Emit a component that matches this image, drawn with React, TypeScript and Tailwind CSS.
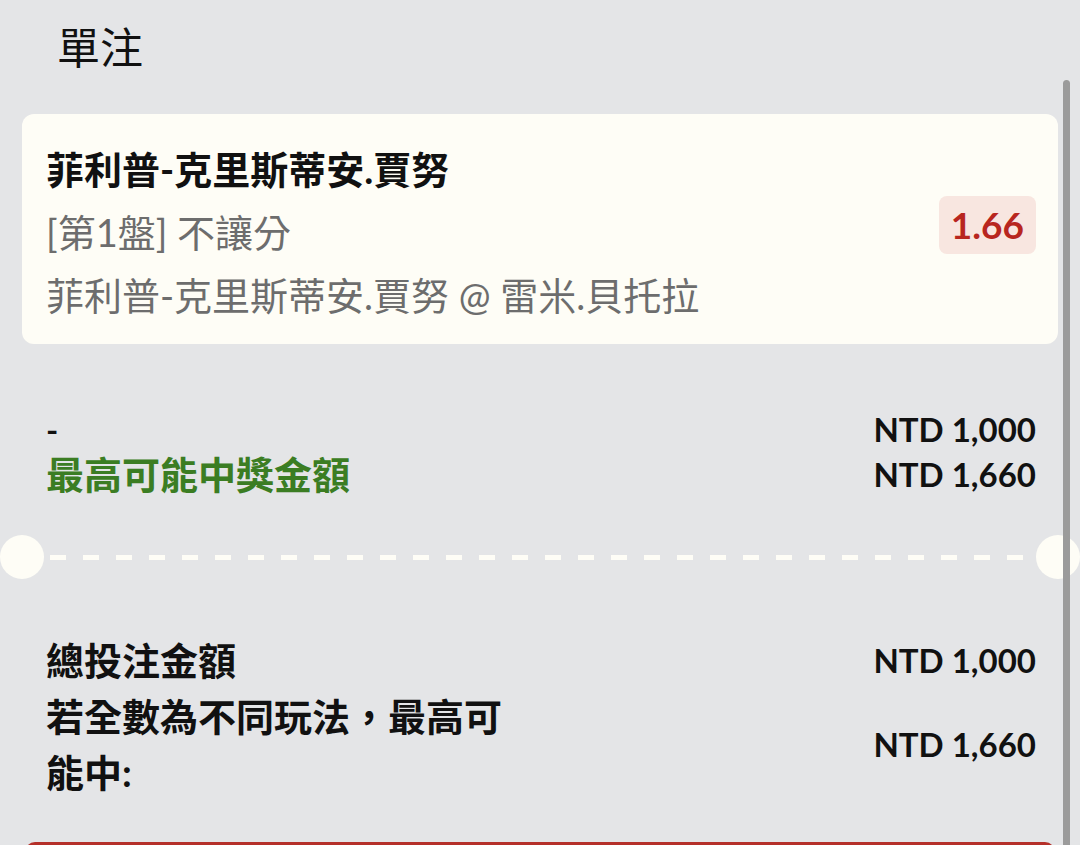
export default function App() {
  return (
    <div
      className="relative h-[845px] w-[1080px] overflow-hidden bg-[#e4e5e7] text-[#111]"
      style={{ fontFamily: 'Lato, "Noto Sans CJK TC", sans-serif' }}
    >
      {/* Header */}
      <div className="pl-[57px] pt-[18px] text-[43px] leading-[60px]">單注</div>

      <div className="px-[22px] pt-[36px]">
        {/* Selection card */}
        <div className="flex items-center justify-between rounded-[12px] bg-[#fefdf6] pl-[24px] pr-[22px] pt-[24px] pb-[17px]">
          <div className="text-[38px] leading-[63px]">
            <div className="font-bold text-[#111]">菲利普-克里斯蒂安.賈努</div>
            <div className="text-[#6d6d6d]">[第1盤] 不讓分</div>
            <div className="text-[#6d6d6d]">菲利普-克里斯蒂安.賈努 @ 雷米.貝托拉</div>
          </div>
          <div className="mb-[16px] rounded-[8px] bg-[#f8e6e0] px-[12px] text-[37px] font-bold leading-[58px] text-[#b8261f]">
            1.66
          </div>
        </div>

        {/* Stake */}
        <div className="mt-[63px] pl-[24px] pr-[22px] font-bold leading-[45px]">
          <div className="flex items-center justify-between">
            <span className="text-[33px]">-</span>
            <span className="text-[33px]">NTD 1,000</span>
          </div>
          <div className="flex items-center justify-between">
            <span className="text-[38px] text-[#3b7d23]">最高可能中獎金額</span>
            <span className="text-[33px]">NTD 1,660</span>
          </div>
        </div>

        {/* Ticket divider */}
        <div className="-mx-[22px] mt-[38px] flex h-[44px] items-center">
          <div className="h-[44px] w-[44px] rounded-full bg-[#fefdf6]" />
          <div className="mx-[6px] h-[5px] flex-1 bg-[repeating-linear-gradient(to_right,#fefdf6_0_16px,transparent_16px_33px)]" />
          <div className="h-[44px] w-[44px] rounded-full bg-[#fefdf6]" />
        </div>

        {/* Totals */}
        <div className="mt-[53px] pl-[24px] pr-[22px] font-bold leading-[56px]">
          <div className="flex items-center justify-between">
            <span className="text-[38px]">總投注金額</span>
            <span className="text-[33px]">NTD 1,000</span>
          </div>
          <div className="flex items-center justify-between">
            <span className="w-[480px] text-[38px]">若全數為不同玩法，最高可能中:</span>
            <span className="text-[33px]">NTD 1,660</span>
          </div>
        </div>

        {/* Place bet button (cut off) */}
        <div className="mx-[3px] mt-[42px] h-[40px] rounded-t-[10px] bg-[#b5302a]" />
      </div>

      {/* Scrollbar */}
      <div className="absolute right-[10px] top-[80px] bottom-0 w-[7px] rounded-t-full bg-[#9b9b9b]" />
    </div>
  );
}
